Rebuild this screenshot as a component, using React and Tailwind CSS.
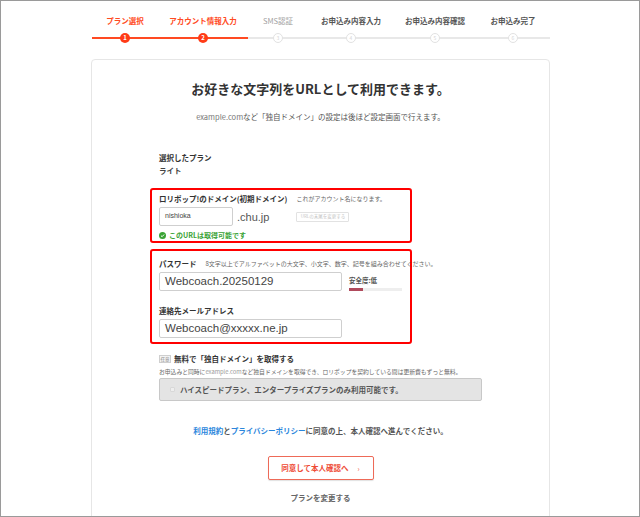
import React from 'react';

// ============================================
// STEPPER
// ============================================

const steps = [
    { label: 'プラン選択', width: 'w-[66px]', done: true, tone: 'red' },
    { label: 'アカウント情報入力', width: 'w-[90px]', done: true, tone: 'red' },
    { label: 'SMS認証', width: 'w-[60px]', done: false, tone: 'light' },
    { label: 'お申込み内容入力', width: 'w-[86px]', done: false, tone: 'dark' },
    { label: 'お申込み内容確認', width: 'w-[82px]', done: false, tone: 'dark' },
    { label: 'お申込み完了', width: 'w-[74px]', done: false, tone: 'dark' },
];

const toneClass = {
    red: 'text-[#ff4a22]',
    light: 'text-[#a0a0a0] font-normal',
    dark: 'text-[#555]',
};

const Stepper = () => (
    <div className="ml-[91px] flex w-[458px] pt-[15px]">
        {steps.map((s, i) => (
            <div key={s.label} className={`${s.width} flex flex-col items-center`}>
                <span className={`text-[7.5px] leading-[10px] font-bold whitespace-nowrap ${toneClass[s.tone]}`}>
                    {s.label}
                </span>
                <div className="relative mt-[6px] flex h-[11px] w-full items-center justify-center">
                    <div className={`absolute inset-x-0 top-[5px] ${s.done ? 'h-[2px] bg-[#ff4a22]' : 'h-[2px] bg-[#e8e8e8]'}`} />
                    {s.done ? (
                        <div className="relative flex h-[10px] w-[10px] items-center justify-center rounded-full bg-[#ff3b17] text-[6px] font-bold leading-none text-white">
                            {i + 1}
                        </div>
                    ) : (
                        <div className="relative flex h-[10px] w-[10px] items-center justify-center rounded-full border border-[#e2e2e2] bg-white text-[5px] leading-none text-[#d6d6d6]">
                            {i + 1}
                        </div>
                    )}
                </div>
            </div>
        ))}
    </div>
);

// ============================================
// FORM PIECES
// ============================================

const Label = ({ children, hint }) => (
    <div className="flex items-center whitespace-nowrap text-[7.5px] leading-[10px] font-bold text-[#333]">
        <span className="shrink-0">{children}</span>
        {hint && <span className="ml-[9px] shrink-0 text-[6px] font-normal text-[#666]">{hint}</span>}
    </div>
);

const TextBox = ({ value, className = '', textClass = '' }) => (
    <div className={`flex shrink-0 items-center rounded-[2px] border border-[#cfcfcf] bg-white px-[5px] ${className}`}>
        <span className={`text-[#444] ${textClass}`} style={{ fontFamily: '"Liberation Sans", Arial, sans-serif' }}>
            {value}
        </span>
    </div>
);

const RedFrame = ({ children, className = '' }) => (
    <div className={`-mx-[9px] w-[262px] rounded-[3px] border-2 border-[#ff0000] px-[7px] ${className}`}>
        {children}
    </div>
);

// ============================================
// PAGE
// ============================================

export default function App() {
    return (
        <div
            className="h-[517px] w-[640px] overflow-hidden border border-[#9a9a9a] bg-white text-[#333]"
            style={{ fontFamily: '"Noto Sans CJK JP", "Noto Sans", sans-serif' }}
        >
            <Stepper />

            {/* Card */}
            <div className="ml-[90px] mt-[16px] h-[480px] w-[459px] rounded-[4px] border border-[#e6e6e6] bg-white">
                <h1 className="pt-[21px] text-center text-[13px] leading-[16px] font-bold text-[#333]">
                    お好きな文字列をURLとして利用できます。
                </h1>
                <p className="mt-[15px] text-center text-[7.5px] leading-[10px] text-[#555]">
                    <span className="text-[#777]">example.com</span>など「独自ドメイン」の設定は後ほど設定画面で行えます。
                </p>

                <div className="ml-[67px] w-[323px]">
                    <div className="mt-[31px] text-[7.5px] leading-[10px] font-bold text-[#333]">選択したプラン</div>
                    <div className="mt-[3px] text-[7.5px] leading-[10px] font-bold text-[#444]">ライト</div>

                    {/* Domain */}
                    <RedFrame className="mt-[12px] h-[55px] pt-[4px]">
                        <Label hint="これがアカウント名になります。">ロリポップ!のドメイン(初期ドメイン)</Label>
                        <div className="mt-[3px] flex items-center">
                            <TextBox value="nishioka" className="h-[19px] w-[74px]" textClass="text-[7px]" />
                            <span
                                className="ml-[4px] text-[11px] leading-[12px] text-[#555]"
                                style={{ fontFamily: '"Liberation Sans", Arial, sans-serif' }}
                            >
                                .chu.jp
                            </span>
                            <div className="ml-[27px] flex h-[10px] w-[53px] items-center justify-center rounded-[1px] border border-[#e2e2e2] text-[4.5px] leading-none text-[#c4c4c4] whitespace-nowrap">
                                URLの末尾を変更する
                            </div>
                        </div>
                        <div className="mt-[5px] flex items-center gap-[3px] text-[7px] leading-[9px] font-bold text-[#3aa335]">
                            <svg width="7" height="7" viewBox="0 0 10 10">
                                <circle cx="5" cy="5" r="5" fill="#3aa335" />
                                <path d="M2.8 5.2 L4.4 6.7 L7.3 3.6" stroke="#fff" strokeWidth="1.4" fill="none" />
                            </svg>
                            このURLは取得可能です
                        </div>
                    </RedFrame>

                    {/* Password + mail */}
                    <RedFrame className="mt-[6px] h-[95px] pt-[8px]">
                        <Label hint="8文字以上でアルファベットの大文字、小文字、数字、記号を組み合わせてください。">パスワード</Label>
                        <div className="mt-[3px] flex items-start">
                            <TextBox value="Webcoach.20250129" className="h-[19px] w-[183px]" textClass="text-[11.5px]" />
                            <div className="ml-[7px] shrink-0 pt-[4px]">
                                <div className="text-[6.5px] leading-[8px] font-bold text-[#555]">安全度:低</div>
                                <div className="mt-[4px] flex h-[3px] w-[53px] bg-[#eeeeee]">
                                    <div className="h-full w-[14px] bg-[#b04a5c]" />
                                </div>
                            </div>
                        </div>
                        <div className="mt-[15px]">
                            <Label>連絡先メールアドレス</Label>
                        </div>
                        <TextBox value="Webcoach@xxxxx.ne.jp" className="mt-[3px] h-[19px] w-[183px]" textClass="text-[11.5px]" />
                    </RedFrame>

                    {/* Optional domain */}
                    <div className="mt-[10px] flex items-center text-[7.5px] leading-[10px] font-bold text-[#333]">
                        <span className="mr-[3px] flex h-[8px] w-[12px] items-center justify-center border border-[#cfcfcf] bg-[#f3f3f3] text-[4.5px] font-normal leading-none text-[#888]">
                            任意
                        </span>
                        無料で「独自ドメイン」を取得する
                    </div>
                    <div className="mt-[4px] text-[5.8px] leading-[8px] text-[#666] whitespace-nowrap">
                        お申込みと同時に<span className="text-[#999]">example.com</span>など独自ドメインを取得でき、ロリポップを契約している間は更新費もずっと無料。
                    </div>
                    <div className="mt-[2px] flex h-[23px] w-[323px] items-center rounded-[2px] border border-[#c8c8c8] bg-[#e4e4e4] px-[10px]">
                        <span className="mr-[5px] h-[5px] w-[5px] rounded-[1px] border border-[#d8d8d8] bg-[#eee]" />
                        <span className="text-[7.5px] leading-[10px] font-bold text-[#555]">
                            ハイスピードプラン、エンタープライズプランのみ利用可能です。
                        </span>
                    </div>
                </div>

                {/* Terms */}
                <p className="mt-[25px] text-center text-[7.5px] leading-[10px] font-bold text-[#555]">
                    <span className="text-[#2b86dc]">利用規約</span>と<span className="text-[#2b86dc]">プライバシーポリシー</span>に同意の上、本人確認へ進んでください。
                </p>

                <div className="mt-[20px] flex justify-center">
                    <button className="relative flex h-[24px] w-[106px] items-center justify-center rounded-[2px] border border-[#ee6a58] bg-white text-[7.5px] font-bold text-[#ee4b35] shadow-[0_1px_1px_rgba(0,0,0,0.12)]">
                        同意して本人確認へ
                        <span className="ml-[9px] text-[7px] font-normal">›</span>
                    </button>
                </div>

                <p className="mt-[13px] text-center text-[7.5px] leading-[10px] font-bold text-[#666]">プランを変更する</p>
            </div>
        </div>
    );
}
